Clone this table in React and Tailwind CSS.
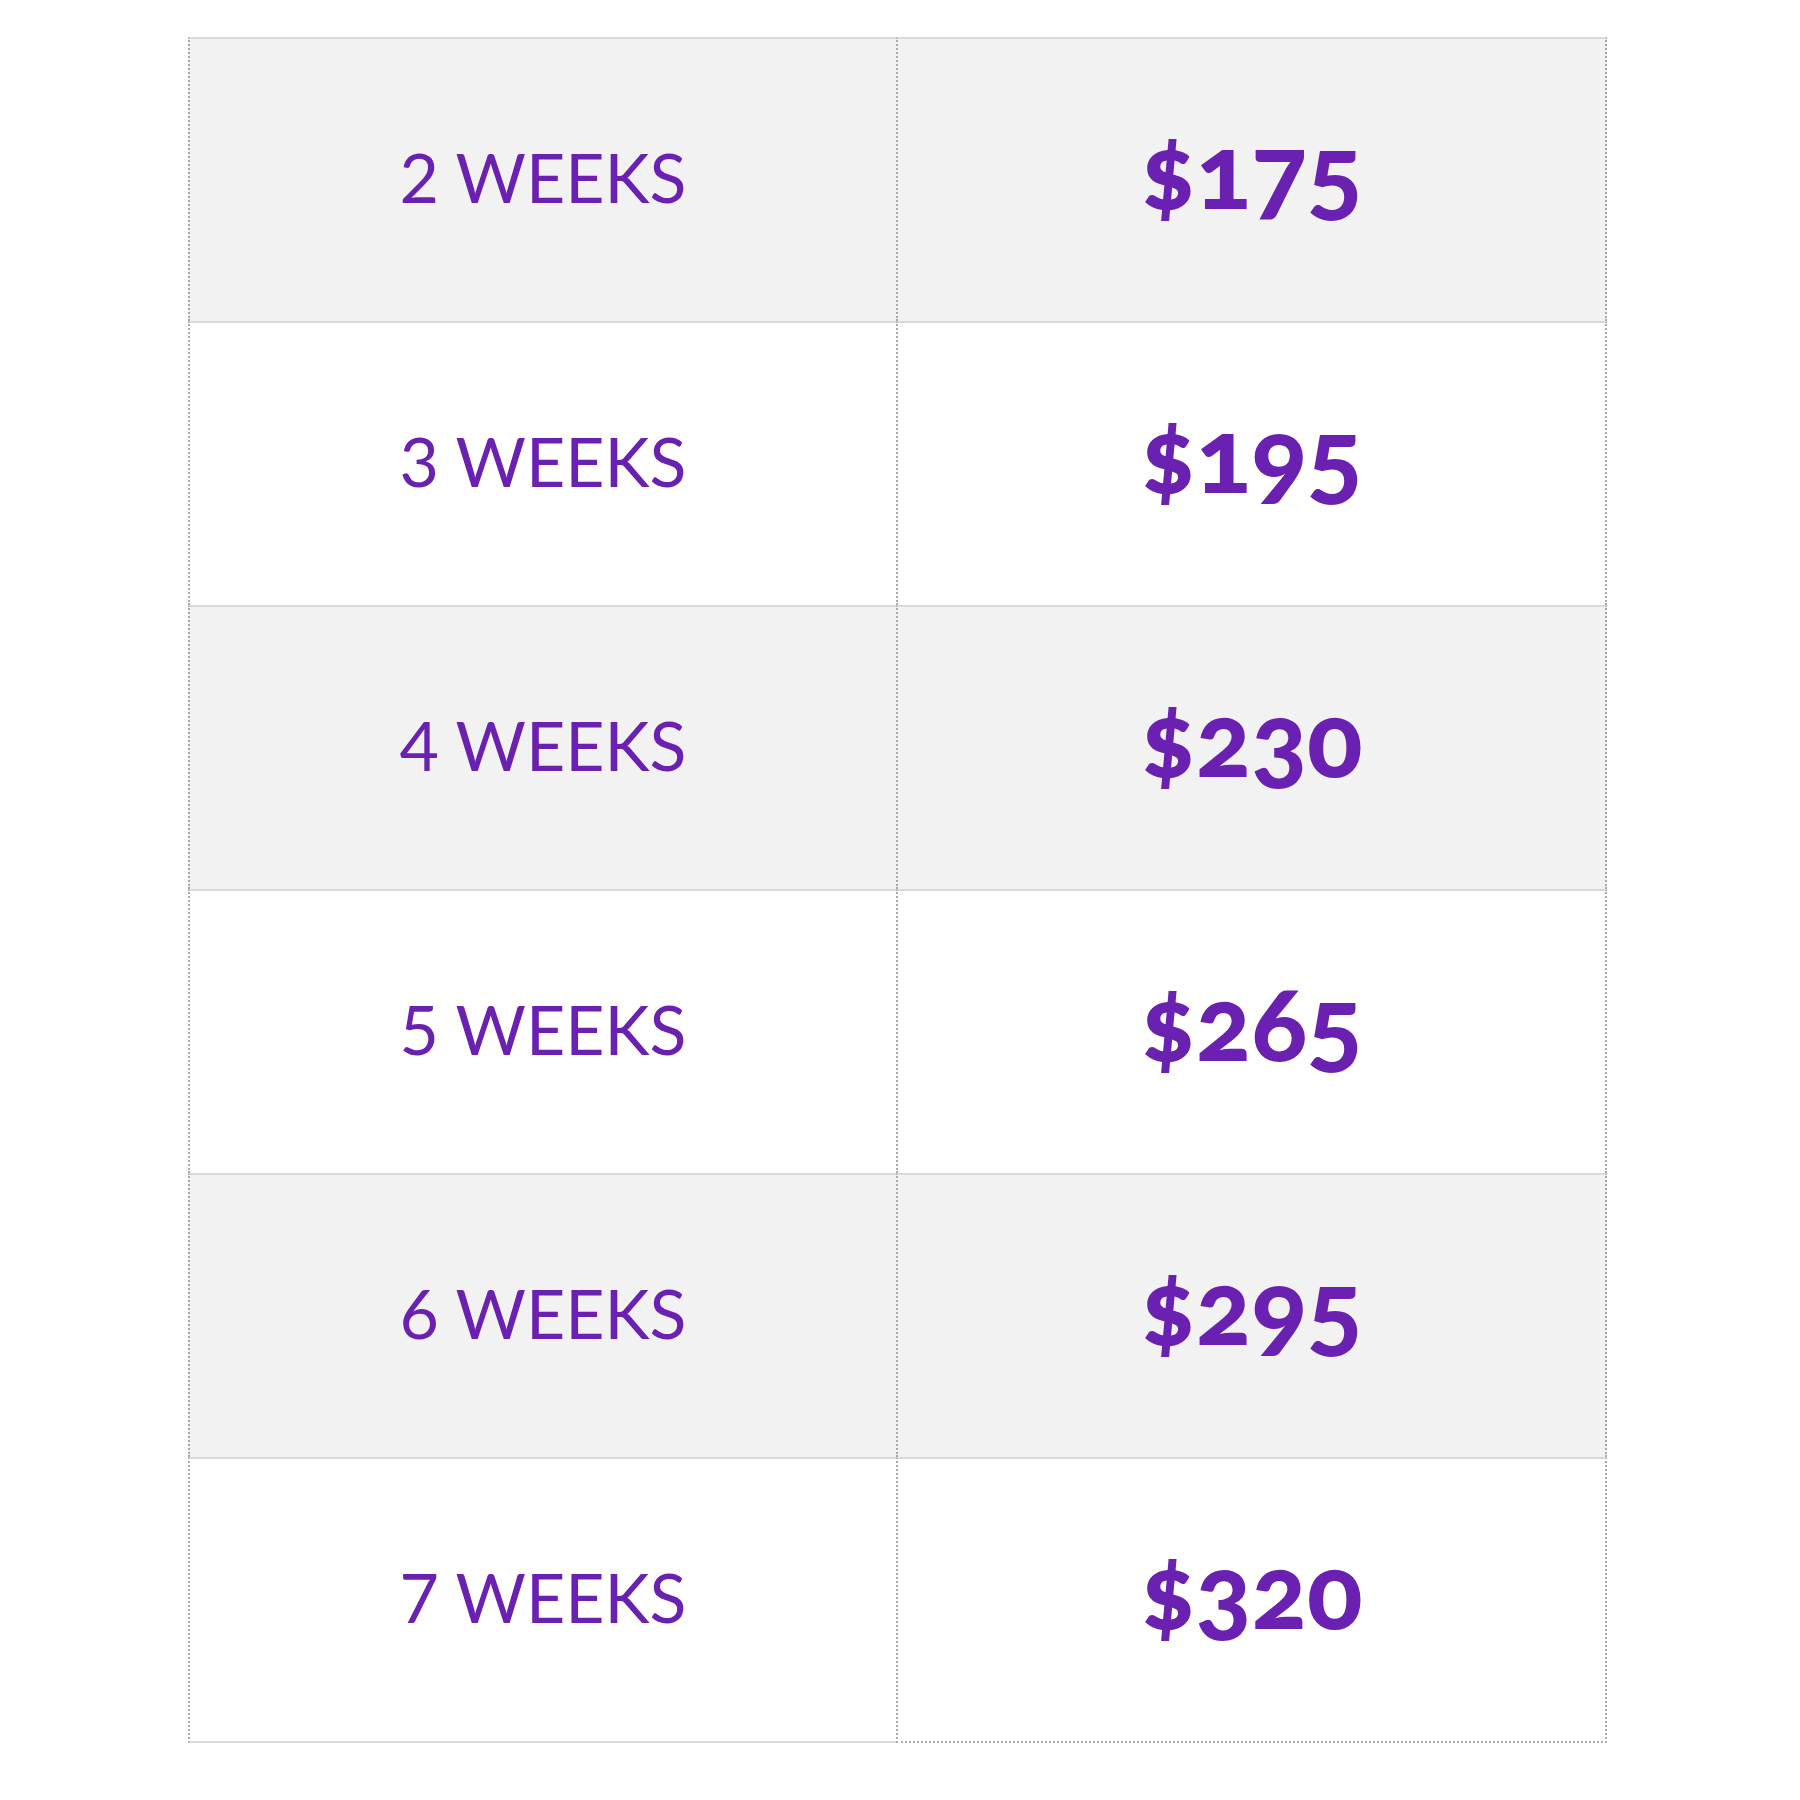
const rows = [
  { weeks: "2 WEEKS", price: "$175", shaded: true },
  { weeks: "3 WEEKS", price: "$195", shaded: false },
  { weeks: "4 WEEKS", price: "$230", shaded: true },
  { weeks: "5 WEEKS", price: "$265", shaded: false },
  { weeks: "6 WEEKS", price: "$295", shaded: true },
  { weeks: "7 WEEKS", price: "$320", shaded: false },
];

export default function App() {
  return (
    <div className="min-h-screen bg-white pt-[37px] font-['Lato',sans-serif]">
      <div className="ml-[188px] grid w-[1419px] grid-cols-[708px_711px]">
        {rows.map((row, i) => {
          const last = i === rows.length - 1;
          const bg = row.shaded ? "bg-[#f2f2f2]" : "bg-white";
          return [
            <div
              key={row.weeks}
              className={`flex h-[284px] items-center justify-center border-t-2 border-t-[#d9d9d9] border-l-2 border-l-[#a9a9a9] border-dotted ${bg} ${
                last ? "h-[286px] border-b-2 border-b-[#d9d9d9]" : ""
              }`}
              style={{ borderTopStyle: "solid", borderBottomStyle: "solid" }}
            >
              <span className="pb-[6px] text-[68px] leading-none font-normal text-[#6a20b0]">
                {row.weeks}
              </span>
            </div>,
            <div
              key={row.price}
              className={`flex h-[284px] items-center justify-center border-t-2 border-t-[#d9d9d9] border-x-2 border-x-[#a9a9a9] border-dotted ${bg} ${
                last ? "h-[286px] border-b-2 border-b-[#a9a9a9]" : ""
              }`}
              style={{ borderTopStyle: "solid" }}
            >
              <span className="pb-[22px] text-[103px] leading-none font-black text-[#6a20b0] [font-variant-numeric:oldstyle-nums]">
                {row.price}
              </span>
            </div>,
          ];
        })}
      </div>
    </div>
  );
}
